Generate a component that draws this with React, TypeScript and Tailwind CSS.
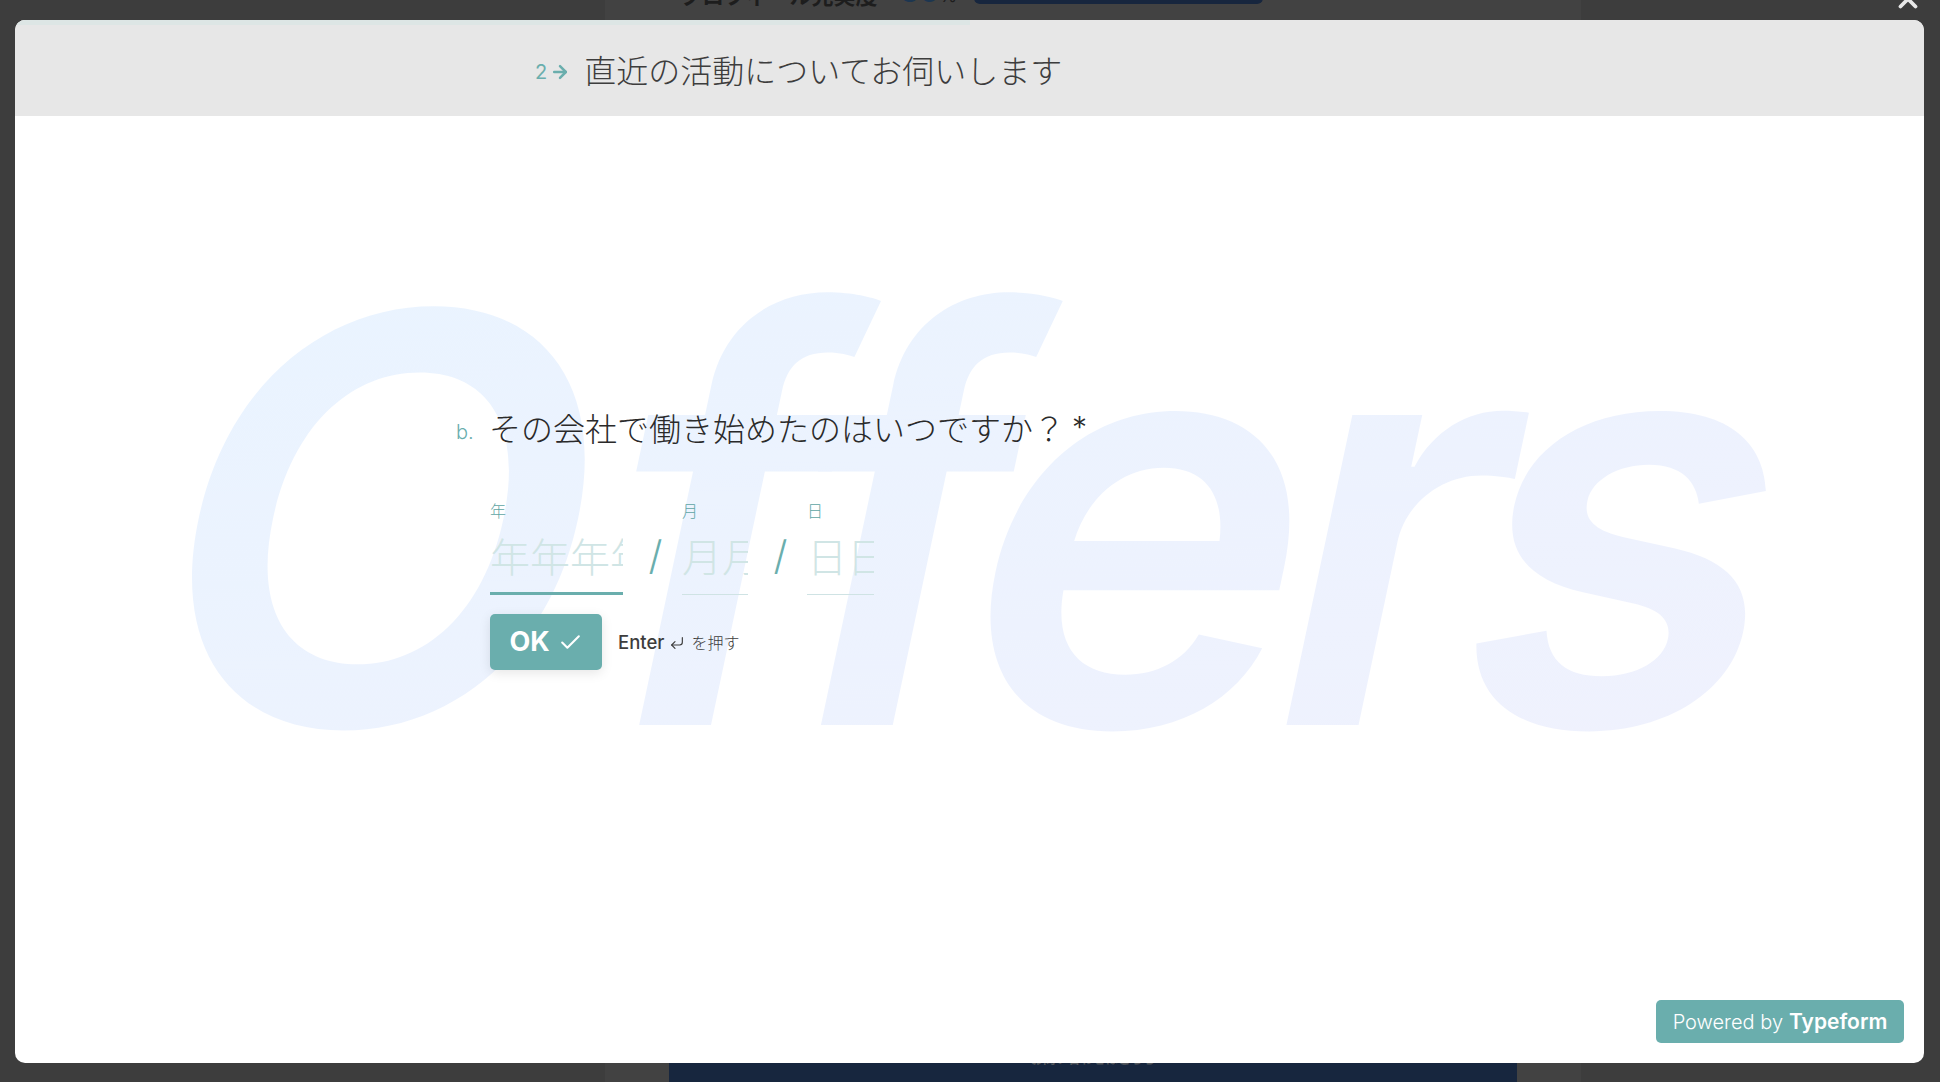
import { ArrowRight, Check, CornerDownLeft, X } from "lucide-react";

const FIELDS = [
  { label: "年", placeholder: "年年年年", width: "w-[133px]", border: "border-b-[3px] border-[#6aaead]" },
  { label: "月", placeholder: "月月", width: "w-[66px]", border: "border-b border-[#cfe3e4]" },
  { label: "日", placeholder: "日日", width: "w-[67px]", border: "border-b border-[#cfe3e4]" },
];

function Backdrop() {
  return (
    <div className="flex h-full w-full">
      <div className="w-[605px] bg-[#3d3d3d]" />
      <div className="flex w-[976px] flex-col justify-between bg-[#424242]">
        <div className="-mt-[16px] flex h-[20px] items-end pl-[75px]">
          <span className="-mb-[3px] w-[220px] text-[22px] font-bold leading-[22px] text-[#1d1d1d]">プロフィール充実度</span>
          <span className="-mb-[3px] w-[74px] text-[30px] font-bold leading-[22px] text-[#1d3650]">
            50<span className="text-[18px] font-normal text-[#1d1d1d]">%</span>
          </span>
          <div className="h-[20px] w-[289px] rounded-b-[6px] bg-[#17263e]" />
        </div>
        <div className="mx-[64px] h-[19px] bg-[#17263e] text-center">
          <div className="-mt-[11px] text-[12.5px] font-bold leading-[16px] text-[#55595f]">お問い合わせはこちら</div>
        </div>
      </div>
      <div className="flex-1 bg-[#3d3d3d]" />
    </div>
  );
}

function DateInput() {
  return (
    <div className="flex">
      {FIELDS.map((f, i) => (
        <div key={f.label} className="flex">
          {i > 0 && (
            <div className="flex w-[59px] items-end justify-center pb-[15px] pl-[6px] text-[40px] font-light leading-[48px] text-[#6aaead]">
              /
            </div>
          )}
          <div className={f.width}>
            <div className="h-[24px] text-[16px] font-light leading-[24px] text-[#5ea5a4]">{f.label}</div>
            <div className={`mt-[11px] h-[61px] ${f.border}`}>
              <input
                readOnly
                placeholder={f.placeholder}
                className="h-[48px] w-full bg-transparent text-[40px] font-light leading-[48px] outline-none placeholder:text-[#d0e5e5]"
              />
            </div>
          </div>
        </div>
      ))}
    </div>
  );
}

export default function App() {
  return (
    <div className="relative h-[1082px] w-[1940px] overflow-hidden font-['Inter','Noto_Sans_CJK_JP',sans-serif]">
      <Backdrop />

      <button className="absolute right-[17px] -top-[16px] text-[#e8e8e8]">
        <X size={30} strokeWidth={3} />
      </button>

      <div className="absolute left-[15px] top-[20px] flex h-[1043px] w-[1909px] flex-col overflow-hidden rounded-[10px] bg-white">
        <header className="h-[96px] shrink-0 bg-[#e7e7e7]">
          <div className="h-[5px] w-[955px] bg-[#dde6e5]" />
          <div className="flex h-[91px] items-center pt-[3px] pl-[520px]">
            <span className="text-[20px] leading-none text-[#6aaead]">2</span>
            <ArrowRight size={20} strokeWidth={3} className="ml-[3px] text-[#6aaead]" />
            <h1 className="ml-[14px] text-[32px] font-light leading-[44px] text-[#3d3d3d]">直近の活動についてお伺いします</h1>
          </div>
        </header>

        <main className="relative flex-1 pl-[441px] pt-[292px]">
          <div className="absolute left-[155px] top-[63px] -skew-x-12 select-none bg-gradient-to-br from-[#e9f4ff] to-[#f0f1fd] bg-clip-text pr-[40px] text-[568px] font-semibold leading-[680px] text-transparent">
            <span className="tracking-[14px]">O</span>
            <span className="tracking-[-39px]">f</span>
            <span className="tracking-[-41px]">f</span>
            <span className="tracking-[-26px]">e</span>
            <span className="tracking-[-39px]">r</span>
            <span>s</span>
          </div>

          <div className="relative">
            <div className="flex h-[44px] items-center">
              <span className="w-[33px] pt-[3px] text-[20px] font-light text-[#6aaead]">b.</span>
              <p className="flex text-[32px] font-light leading-[44px] text-[#2a2a2a]">
                その会社で働き始めたのはいつですか？<span className="-mt-[3px] ml-[7px] text-[30px]">*</span>
              </p>
            </div>

            <div className="ml-[34px] mt-[47px]">
              <DateInput />
              <div className="mt-[19px] flex items-center">
                <button className="flex h-[56px] w-[112px] items-center justify-center gap-[8px] rounded-[5px] bg-[#6aaead] text-[27px] font-bold text-white shadow-[0_3px_12px_rgba(0,0,0,0.1)]">
                  OK
                  <Check size={25} strokeWidth={2} />
                </button>
                <div className="ml-[16px] flex items-center pt-[2px] text-[#3d3d3d]">
                  <span className="text-[18.5px] font-medium">Enter</span>
                  <CornerDownLeft size={16} strokeWidth={1.75} className="ml-[5px]" />
                  <span className="ml-[6px] text-[16px] font-light">を押す</span>
                </div>
              </div>
            </div>
          </div>

          <a className="absolute bottom-[20px] right-[20px] flex h-[43px] w-[248px] items-center justify-center rounded-[5px] bg-[#6aaead] text-[20px] font-light text-white">
            Powered by <span className="ml-[6px] text-[21px] font-semibold">Typeform</span>
          </a>
        </main>
      </div>
    </div>
  );
}
